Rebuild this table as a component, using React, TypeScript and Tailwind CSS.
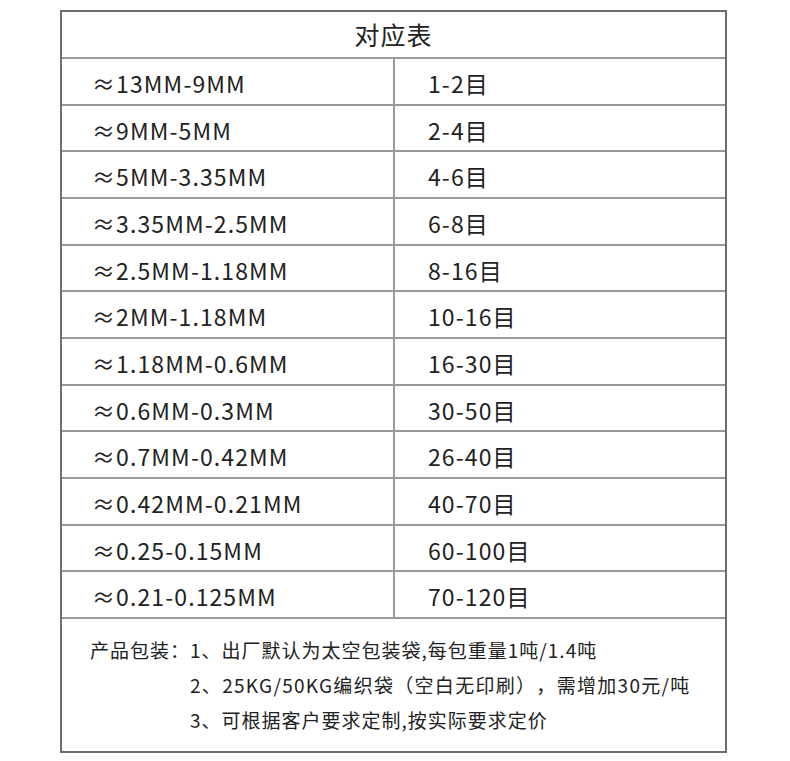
const rows: [string, string][] = [
  ['≈13MM-9MM', '1-2目'],
  ['≈9MM-5MM', '2-4目'],
  ['≈5MM-3.35MM', '4-6目'],
  ['≈3.35MM-2.5MM', '6-8目'],
  ['≈2.5MM-1.18MM', '8-16目'],
  ['≈2MM-1.18MM', '10-16目'],
  ['≈1.18MM-0.6MM', '16-30目'],
  ['≈0.6MM-0.3MM', '30-50目'],
  ['≈0.7MM-0.42MM', '26-40目'],
  ['≈0.42MM-0.21MM', '40-70目'],
  ['≈0.25-0.15MM', '60-100目'],
  ['≈0.21-0.125MM', '70-120目'],
];

export default function App() {
  return (
    <div
      className="h-[761px] w-[790px] bg-white pt-[10px] text-[#222] [text-spacing-trim:space-all]"
      style={{ fontFamily: '"Noto Sans CJK SC", "Noto Sans", sans-serif' }}
    >
      <div className="ml-[60px] w-[667px] border-2 border-[#6e6e6e]">
        <div className="flex h-[45px] items-center justify-center text-[25px] tracking-[1px]">对应表</div>
        {rows.map(([size, mesh]) => (
          <div key={size} className="flex h-[46.67px] border-t-2 border-[#9a9a9a] text-[23px] tracking-[1.1px]">
            <div className="flex w-[331px] items-center pl-[30px] pt-[4px]">{size}</div>
            <div className="flex flex-1 items-center border-l-2 border-[#9a9a9a] pl-[33px] pt-[4px]">{mesh}</div>
          </div>
        ))}
        <div className="h-[134px] border-t-2 border-[#9a9a9a] pl-[28px] pt-[13px] text-[19px] leading-[35px] tracking-[1px]">
          <div className="flex">
            <span className="w-[100px]">产品包装：</span>
            <span>1、出厂默认为太空包装袋,每包重量1吨/1.4吨</span>
          </div>
          <div className="pl-[100px] tracking-[1.3px]">2、25KG/50KG编织袋（空白无印刷），需增加30元/吨</div>
          <div className="pl-[100px]">3、可根据客户要求定制,按实际要求定价</div>
        </div>
      </div>
    </div>
  );
}
